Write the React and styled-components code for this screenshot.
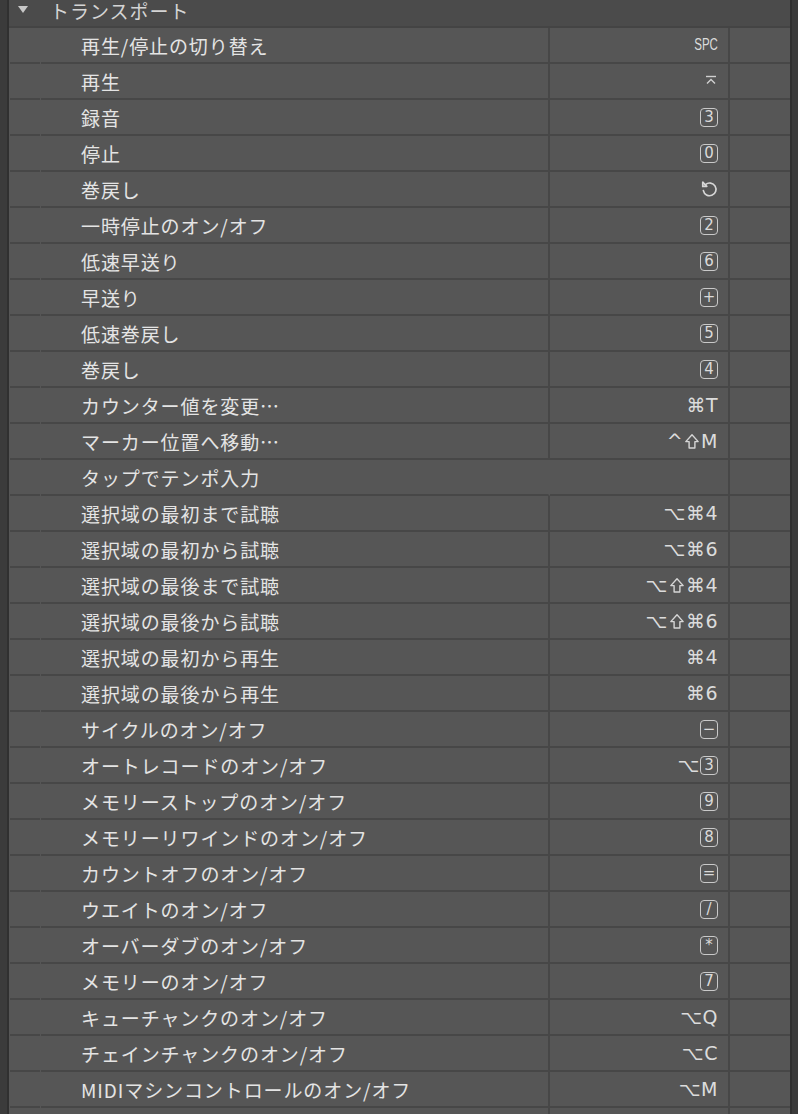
import React from "react";
import styled, { createGlobalStyle } from "styled-components";

const Global = createGlobalStyle`
  html, body { margin: 0; padding: 0; background: #565656; }
  body { font-family: "Noto Sans CJK JP", "Noto Sans", sans-serif; }
`;

const Page = styled.div`
  display: flex;
  width: 798px;
  height: 1114px;
  overflow: hidden;
  background: #565656;
`;

const LeftStrip = styled.div`
  width: 7px;
  flex: none;
  background: #3b3b3b;
  border-right: 2px solid #303030;
`;

const RightStrip = styled.div`
  width: 6px;
  flex: none;
  background: #3b3b3b;
  border-left: 2px solid #303030;
`;

const Table = styled.div`
  flex: 1;
  display: flex;
  flex-direction: column;
  min-width: 0;
`;

const Header = styled.div`
  height: 26px;
  flex: none;
  display: flex;
  align-items: flex-start;
  background: #4b4b4b;
  border-bottom: 2px solid #444444;
  color: #d4d4d4;
  font-size: 19px;
  line-height: 22px;
`;

const Triangle = styled.span`
  width: 0;
  height: 0;
  margin: 6px 0 0 9px;
  border-left: 5px solid transparent;
  border-right: 5px solid transparent;
  border-top: 7px solid #c8c8c8;
`;

const HeaderTitle = styled.span`
  margin-left: 22px;
  letter-spacing: 1px;
`;

const Row = styled.div`
  display: grid;
  grid-template-columns: 32px 509px 180px 1fr;
  height: 36px;
  flex: none;
`;

const Cell = styled.div`
  display: flex;
  align-items: center;
  border-bottom: 2px solid #474747;
  min-width: 0;
`;

const Gutter = styled(Cell)`
  margin-left: 1px;
  margin-right: 1px;
`;

const NameCell = styled(Cell)`
  padding-left: 40px;
  color: #e4e4e4;
  font-size: 19px;
  letter-spacing: 0.9px;
  border-right: 2px solid ${(p) => (p.$divider ? "#474747" : "transparent")};
  white-space: nowrap;
`;

const KeyCell = styled(Cell)`
  justify-content: flex-end;
  padding-right: 10px;
  border-right: 2px solid #474747;
  color: #dcdcdc;
  font-family: "DejaVu Sans", "Noto Sans", sans-serif;
  font-size: 19px;
  letter-spacing: 0.5px;
  white-space: nowrap;
`;

const ExtraCell = styled(Cell)``;

const Spc = styled.span`
  font-family: "Liberation Sans", sans-serif;
  font-size: 16px;
  display: inline-block;
  transform: scaleX(0.72);
  transform-origin: right center;
  letter-spacing: 0;
`;

const KeyBox = styled.span`
  display: inline-flex;
  align-items: center;
  justify-content: center;
  box-sizing: border-box;
  width: 18px;
  height: 19px;
  border: 1.5px solid #c9c9c9;
  border-radius: 4px;
  background: transparent;
  font-family: "DejaVu Sans", sans-serif;
  font-weight: normal;
  font-size: 15px;
  line-height: 1;
  color: #dadada;
  letter-spacing: 0;
`;

const Glyph = styled.span`
  display: inline-flex;
  align-items: center;
`;

const EnterIcon = () => (
  <svg width="14" height="14" viewBox="0 0 14 14" fill="none" stroke="#d0d0d0" strokeWidth="1.4">
    <path d="M2 2.5h10" />
    <path d="M3 9.5l4-4 4 4" />
  </svg>
);

const RewindIcon = () => (
  <svg width="18" height="18" viewBox="0 0 17 17" fill="none" stroke="#d6d6d6" strokeWidth="1.6" strokeLinecap="round">
    <path d="M5.2 4.3A6 6 0 1 1 3.2 10" />
    <path d="M2.8 2.2l3.2 3.6" />
    <path d="M2.6 2.2v3.8h3.8" />
  </svg>
);

const ShiftIcon = () => (
  <svg width="16" height="17" viewBox="0 0 16 17" fill="none" stroke="#d6d6d6" strokeWidth="1.4" strokeLinejoin="round">
    <path d="M8 1.8L1.8 8.6h3.3v6.4h5.8V8.6h3.3z" />
  </svg>
);

const Shift = () => (
  <Glyph style={{ margin: "0 1px" }}>
    <ShiftIcon />
  </Glyph>
);

const box = (c) => <KeyBox>{c}</KeyBox>;

const rows = [
  ["再生/停止の切り替え", <Spc>SPC</Spc>],
  ["再生", <Glyph><EnterIcon /></Glyph>],
  ["録音", box("3")],
  ["停止", box("0")],
  ["巻戻し", <Glyph><RewindIcon /></Glyph>],
  ["一時停止のオン/オフ", box("2")],
  ["低速早送り", box("6")],
  ["早送り", box("+")],
  ["低速巻戻し", box("5")],
  ["巻戻し", box("4")],
  ["カウンター値を変更…", "⌘T"],
  ["マーカー位置へ移動…", <>^<Shift />M</>],
  ["タップでテンポ入力", null],
  ["選択域の最初まで試聴", "⌥⌘4"],
  ["選択域の最初から試聴", "⌥⌘6"],
  ["選択域の最後まで試聴", <>⌥<Shift />⌘4</>],
  ["選択域の最後から試聴", <>⌥<Shift />⌘6</>],
  ["選択域の最初から再生", "⌘4"],
  ["選択域の最後から再生", "⌘6"],
  ["サイクルのオン/オフ", box("−")],
  ["オートレコードのオン/オフ", <>⌥{box("3")}</>],
  ["メモリーストップのオン/オフ", box("9")],
  ["メモリーリワインドのオン/オフ", box("8")],
  ["カウントオフのオン/オフ", box("=")],
  ["ウエイトのオン/オフ", box("/")],
  ["オーバーダブのオン/オフ", box("*")],
  ["メモリーのオン/オフ", box("7")],
  ["キューチャンクのオン/オフ", "⌥Q"],
  ["チェインチャンクのオン/オフ", "⌥C"],
  ["MIDIマシンコントロールのオン/オフ", "⌥M"],
  ["", null],
];

export default function App() {
  return (
    <>
      <Global />
      <Page>
        <LeftStrip />
        <Table>
          <Header>
            <Triangle />
            <HeaderTitle>トランスポート</HeaderTitle>
          </Header>
          {rows.map(([name, key], i) => (
            <Row key={i}>
              <Gutter />
              <NameCell $divider={key !== null || name === ""}>{name}</NameCell>
              <KeyCell>{key}</KeyCell>
              <ExtraCell />
            </Row>
          ))}
        </Table>
        <RightStrip />
      </Page>
    </>
  );
}
